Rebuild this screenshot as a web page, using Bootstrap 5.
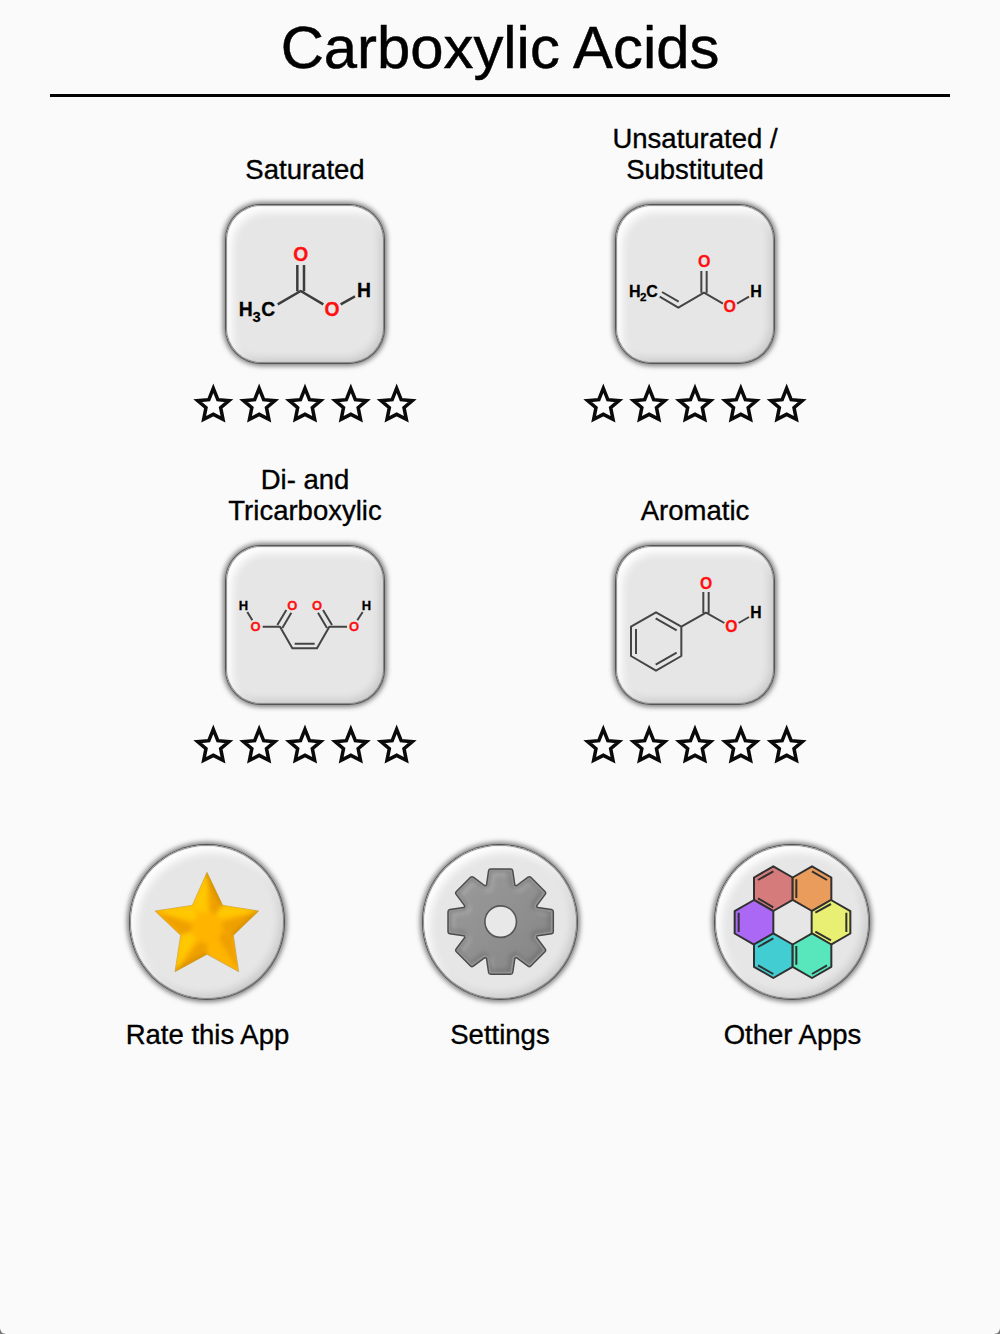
<!DOCTYPE html>
<html lang="en">
<head>
  <meta charset="UTF-8">
  <meta name="viewport" content="width=device-width, initial-scale=1">
  <title>Carboxylic Acids</title>
  <link href="https://cdn.jsdelivr.net/npm/bootstrap@5.3.0/dist/css/bootstrap.min.css" rel="stylesheet">
  <style>
    body { background: #777; color: #000; font-family: "Liberation Sans", Arial, sans-serif; }
    .screen { background: #fafafa; min-height: 1334px; border-radius: 0 0 6px 6px; }
    .title-bar { height: 97px; margin: 0 50px; border-bottom: 3px solid #000; padding-top: 14px; }
    .title-bar h1 { font-size: 59.8px; line-height: 68px; font-weight: 400; -webkit-text-stroke: .5px #000; }
    .topics { width: 780px; padding-top: 26px; }
    .topic { height: 341px; }
    .caption { font-size: 27.5px; line-height: 31.3px; -webkit-text-stroke: .35px #000; }
    .topic .caption { height: 62.600px; margin-bottom: 19.500px; }
    .tile, .disc {
      background: #e6e6e6;
      box-shadow: 0 0 0 1px #555, 0 0 5px 3px rgba(0, 0, 0, .5), inset 0 0 1px .8px #707070,
        inset 5px 6px 8px 1px #fff, inset -4px -4px 8px rgba(0, 0, 0, .13);
    }
    .tile { width: 158px; height: 158px; border-radius: 35px; }
    .disc { width: 154px; height: 154px; border-radius: 50%; }
    .tile svg, .disc svg { display: block; width: 100%; height: 100%; }
    .stars { width: 240px; height: 60px; margin-top: 11.9px; }
    .actions { width: 877.5px; padding-top: 39.5px; }
    .actions .caption { margin-top: 20.800px; }

    .bond { fill: none; stroke: #3c3c3c; stroke-width: 7.5; stroke-linejoin: round; }
    .thin { stroke-width: 6; stroke: #444; }
    .atoms { font-weight: 700; text-anchor: middle; fill: #000; stroke: #000; stroke-width: .8; }
    .oxy { fill: #ff1010; stroke: #ff1010; }
    .ring { stroke: #303030; stroke-width: 6; stroke-linejoin: round; }
  </style>
</head>
<body>
  <!-- shared shapes -->
  <svg width="0" height="0" class="position-absolute">
    <defs>
      <path id="star" d="M85 40L98.500 74L132 77L107 98L114 133L85 118L56 133L63 98L38 77L71.500 74Z" fill="#fcfcfc" stroke="#0a0a0a" stroke-width="10.500"/>
      <g id="five">
        <use href="#star"/>
        <use href="#star" x="137.500"/>
        <use href="#star" x="275"/>
        <use href="#star" x="412.500"/>
        <use href="#star" x="550"/>
      </g>
      <path id="hex" d="M0-67L58-33.500V33.500L0 67L-58 33.500V-33.500Z"/>
      <path id="gold" d="M262 111L309 210L417 227L341 300L357 409L262 357L166 409L183 300L106 227L218 210Z"/>
      <path id="cog" d="M-38-109L-31-157H31L38-109L50-104L89-133L133-89L104-50L109-38L157-31V31L109 38L104 50L133 89L89 133L50 104L38 109L31 157H-31L-38 109L-50 104L-89 133L-133 89L-104 50L-109 38L-157 31V-31L-109-38L-104-50L-133-89L-89-133L-50-104Z"/>
      <clipPath id="goldClip"><use href="#gold"/></clipPath>
      <clipPath id="cogClip"><use href="#cog"/></clipPath>
      <filter id="soft" x="-20%" y="-20%" width="140%" height="140%"><feGaussianBlur stdDeviation="7"/></filter>
      <linearGradient id="sheen" x1="0" y1="0" x2="1" y2="1">
        <stop offset="0" stop-color="#fff" stop-opacity=".08"/>
        <stop offset="1" stop-color="#000" stop-opacity=".1"/>
      </linearGradient>
    </defs>
  </svg>

  <main class="screen">
    <header class="title-bar text-center">
      <h1 class="mb-0">Carboxylic Acids</h1>
    </header>

    <section class="topics row g-0 mx-auto">
      <div class="topic col-6 d-flex flex-column align-items-center">
        <div class="caption d-flex align-items-end text-center">Saturated</div>
        <div class="tile">
          <svg viewBox="33 31 474 474">
            <path class="bond" d="M247 211V290M267 211V290M188 329L257 289L325 329M377 329L420 305"/>
            <g class="atoms" font-size="58">
              <text x="92" y="365">H</text>
              <text x="125" y="381" font-size="44">3</text>
              <text x="160" y="365">C</text>
              <text x="447" y="308">H</text>
              <text class="oxy" x="257.500" y="198">O</text>
              <text class="oxy" x="351" y="363">O</text>
            </g>
          </svg>
        </div>
        <svg class="stars" viewBox="0 0 720 180"><use href="#five"/></svg>
      </div>

      <div class="topic col-6 d-flex flex-column align-items-center">
        <div class="caption d-flex align-items-end text-center">Unsaturated /<br>Substituted</div>
        <div class="tile">
          <svg viewBox="33 31 474 474">
            <path class="bond thin" d="M289 229V294M305 229V294M164 306L220 339L297 294L354 327M171 292L221 321M396 327L432 306"/>
            <g class="atoms" font-size="48">
              <text x="89" y="308">H</text>
              <text x="115" y="320" font-size="35">2</text>
              <text x="141" y="308">C</text>
              <text x="453" y="308">H</text>
              <text class="oxy" x="297.500" y="218">O</text>
              <text class="oxy" x="374" y="353">O</text>
            </g>
          </svg>
        </div>
        <svg class="stars" viewBox="0 0 720 180"><use href="#five"/></svg>
      </div>

      <div class="topic col-6 d-flex flex-column align-items-center">
        <div class="caption d-flex align-items-end text-center">Di- and<br>Tricarboxylic</div>
        <div class="tile">
          <svg viewBox="33 34 474 474">
            <path class="bond thin" d="M97 232L112 257M143 276H195L232 341H306L343 276H396M427 257L443 232M187 271L214 226M202 280L229 234M351 271L324 226M336 280L309 234M239 327H299"/>
            <g class="atoms" font-size="39">
              <text x="85" y="226">H</text>
              <text x="454" y="226">H</text>
              <text class="oxy" x="122" y="288">O</text>
              <text class="oxy" x="232" y="225">O</text>
              <text class="oxy" x="306" y="225">O</text>
              <text class="oxy" x="417" y="288">O</text>
            </g>
          </svg>
        </div>
        <svg class="stars" viewBox="0 0 720 180"><use href="#five"/></svg>
      </div>

      <div class="topic col-6 d-flex flex-column align-items-center">
        <div class="caption d-flex align-items-end text-center">Aromatic</div>
        <div class="tile">
          <svg viewBox="33 34 474 474">
            <path class="bond thin" d="M153 233L229 276V364L153 408L78 364V276ZM229 276L303 234L358 265M295 172V235M311 172V235M401 265L432 247M93 283V358M152 251L215 287M152 390L215 354"/>
            <g class="atoms" font-size="47">
              <text x="453" y="249">H</text>
              <text class="oxy" x="303.500" y="162">O</text>
              <text class="oxy" x="379" y="293">O</text>
            </g>
          </svg>
        </div>
        <svg class="stars" viewBox="0 0 720 180"><use href="#five"/></svg>
      </div>
    </section>

    <section class="actions row g-0 mx-auto">
      <div class="col-4 d-flex flex-column align-items-center">
        <div class="disc">
          <svg viewBox="31 29 462 462">
            <use href="#gold" fill="#ffb400" stroke="#b9a060" stroke-width="2"/>
            <g clip-path="url(#goldClip)">
              <g filter="url(#soft)">
                <path d="M262 250L218 210L262 111ZM250 265L106 227L218 210ZM250 280L183 300L166 409ZM275 255L309 210L417 227Z" fill="#ffc800"/>
                <path d="M275 255L309 210L262 111ZM280 270L417 227L341 300ZM262 290L262 357L166 409ZM106 227L183 300L240 275ZM280 280L341 300L357 409Z" fill="#efa000"/>
                <path d="M262 111L309 210M417 227L341 300M166 409L262 357" fill="none" stroke="#d08c00" stroke-width="12"/>
              </g>
              <circle cx="262" cy="278" r="46" fill="#ffb400" filter="url(#soft)"/>
            </g>
          </svg>
        </div>
        <div class="caption">Rate this App</div>
      </div>

      <div class="col-4 d-flex flex-column align-items-center">
        <div class="disc">
          <svg viewBox="31 29 462 462">
            <g transform="translate(264 259) scale(.965)">
              <use href="#cog" fill="#4c4c4c" stroke="#4c4c4c" stroke-width="18" stroke-linejoin="round"/>
              <use href="#cog" fill="#929292" stroke="#929292" stroke-width="9" stroke-linejoin="round"/>
              <g clip-path="url(#cogClip)">
                <use href="#cog" x="8" y="8" fill="none" stroke="#a8a8a8" stroke-width="9" filter="url(#soft)"/>
                <use href="#cog" x="-4" y="-4" fill="none" stroke="#747474" stroke-width="9" filter="url(#soft)"/>
                <use href="#cog" fill="url(#sheen)"/>
              </g>
              <circle r="49" fill="#e8e8e8" stroke="#555" stroke-width="5"/>
            </g>
          </svg>
        </div>
        <div class="caption">Settings</div>
      </div>

      <div class="col-4 d-flex flex-column align-items-center">
        <div class="disc">
          <svg viewBox="31 29 462 462">
            <g class="ring">
              <use href="#hex" x="206" y="160" fill="#d67b7c"/>
              <use href="#hex" x="322" y="160" fill="#e99c5c"/>
              <use href="#hex" x="148" y="261" fill="#ab68f5"/>
              <use href="#hex" x="379" y="261" fill="#e9ef73"/>
              <use href="#hex" x="206" y="361" fill="#42cdd3"/>
              <use href="#hex" x="322" y="361" fill="#58e6bd"/>
              <!-- inner double bonds -->
              <path fill="none" d="M160 134L206 108M160 189L206 216M322 108L367 134M275 132V188M102 232V290M332 232L379 206M425 232V290M332 289L379 315M160 335L206 309M160 390L206 416M275 332V388M322 416L367 390"/>
            </g>
          </svg>
        </div>
        <div class="caption">Other Apps</div>
      </div>
    </section>
  </main>

  <script src="https://cdn.jsdelivr.net/npm/bootstrap@5.3.0/dist/js/bootstrap.bundle.min.js"></script>
</body>
</html>
